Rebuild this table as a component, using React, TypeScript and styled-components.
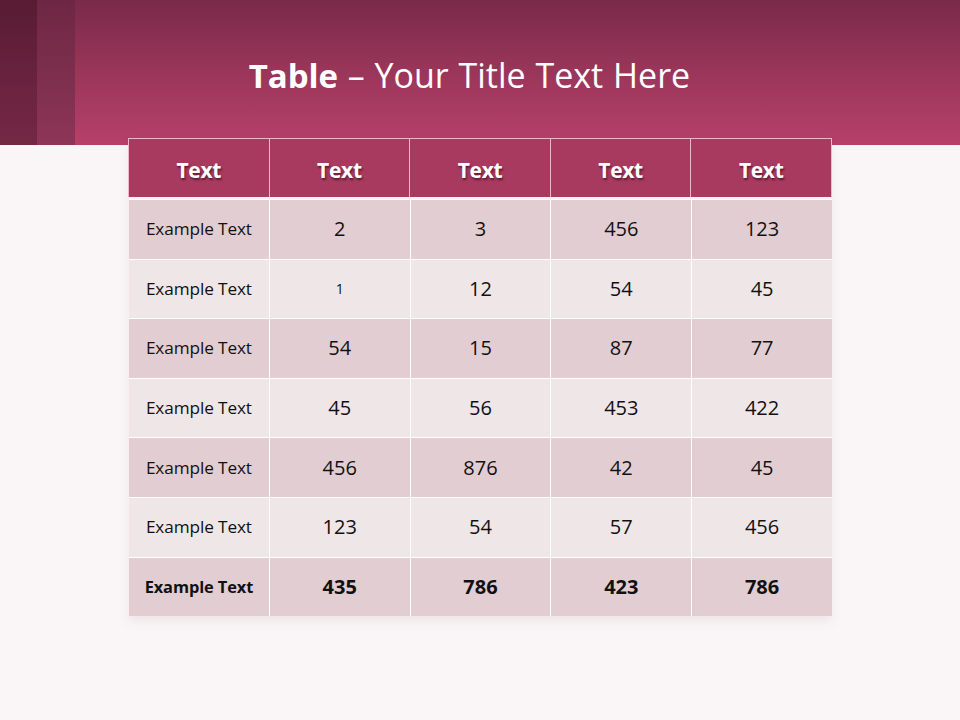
import React from "react";
import styled, { createGlobalStyle } from "styled-components";

const Global = createGlobalStyle`
  html, body { margin: 0; padding: 0; }
  body { background: #faf6f7; font-family: "Open Sans", "Lato", sans-serif; }
`;

const Slide = styled.div`
  width: 960px;
  height: 720px;
  background: #faf6f7;
  display: flex;
  flex-direction: column;
  overflow: hidden;
`;

const Band = styled.header`
  height: 145px;
  display: flex;
  background: linear-gradient(180deg, #7a2a4a 0%, #9a3659 50%, #b6406a 100%);
  flex-shrink: 0;
`;

const Stripe = styled.div<{ $shade: "dark" | "mid" }>`
  width: ${(p) => (p.$shade === "dark" ? 37 : 38)}px;
  background: ${(p) =>
    p.$shade === "dark"
      ? "linear-gradient(180deg, #581b34 0%, #6a2340 60%, #742844 100%)"
      : "linear-gradient(180deg, #6d2744 0%, #80304f 60%, #8e3558 100%)"};
`;

const TitleArea = styled.div`
  flex: 1;
  display: flex;
  justify-content: center;
  padding: 54px 96px 0 0;
`;

const Title = styled.h1`
  margin: 0;
  font-family: "Open Sans", sans-serif;
  font-size: 34px;
  font-weight: 400;
  line-height: 42px;
  color: #ffffff;
  letter-spacing: 0;
  word-spacing: 1px;
  b { font-weight: 700; font-size: 33px; letter-spacing: -0.1px; }
`;

const TableWrap = styled.div`
  margin: -7px 0 0 128px;
  width: 704px;
  display: flex;
  flex-direction: column;
  box-shadow: 0 6px 10px rgba(120, 60, 80, 0.08);
`;

const HeadRow = styled.div`
  display: grid;
  grid-template-columns: repeat(5, 1fr);
  height: 58px;
  border: 1px solid #f2b6ca;
  border-bottom: none;
  background: #f2b6ca;
  gap: 1px;
  margin-bottom: 2px;
`;

const HeadCell = styled.div`
  background: #a8395f;
  display: flex;
  align-items: center;
  justify-content: center;
  padding-top: 3px;
  color: #ffffff;
  font-weight: 700;
  font-size: 21px;
  letter-spacing: -0.3px;
  text-shadow: 1px 2px 2px rgba(40, 0, 15, 0.55);
`;

const Body = styled.div`
  display: flex;
  flex-direction: column;
  background: #ffffff;
  gap: 1px;
  padding-top: 1px;
  border-left: 1px solid #f8eef1;
`;

const Row = styled.div`
  display: grid;
  grid-template-columns: repeat(5, 1fr);
  gap: 1px;
  height: 58.6px;
  background: #ffffff;
`;

const Cell = styled.div<{ $alt: boolean; $bold?: boolean; $small?: boolean; $label?: boolean }>`
  background: ${(p) => (p.$alt ? "#efe6e7" : "#e2cdd3")};
  display: flex;
  align-items: center;
  justify-content: center;
  color: #111111;
  font-size: ${(p) =>
    p.$label ? (p.$bold ? "16.4px" : "17.2px") : p.$small ? "14px" : "20px"};
  letter-spacing: ${(p) => (p.$label ? "-0.1px" : "0")};
  font-weight: ${(p) => (p.$bold ? 700 : 400)};
  padding-bottom: 1px;
`;

const rows: string[][] = [
  ["Example Text", "2", "3", "456", "123"],
  ["Example Text", "1", "12", "54", "45"],
  ["Example Text", "54", "15", "87", "77"],
  ["Example Text", "45", "56", "453", "422"],
  ["Example Text", "456", "876", "42", "45"],
  ["Example Text", "123", "54", "57", "456"],
  ["Example Text", "435", "786", "423", "786"],
];

export default function App() {
  return (
    <Slide>
      <Global />
      <Band>
        <Stripe $shade="dark" />
        <Stripe $shade="mid" />
        <TitleArea>
          <Title>
            <b>Table</b> – Your Title Text Here
          </Title>
        </TitleArea>
      </Band>
      <TableWrap>
        <HeadRow>
          {Array.from({ length: 5 }).map((_, i) => (
            <HeadCell key={i}>Text</HeadCell>
          ))}
        </HeadRow>
        <Body>
          {rows.map((r, ri) => {
            const alt = ri % 2 === 1;
            const bold = ri === rows.length - 1;
            return (
              <Row key={ri}>
                {r.map((c, ci) => (
                  <Cell
                    key={ci}
                    $alt={alt}
                    $bold={bold}
                    $label={ci === 0}
                    $small={ri === 1 && ci === 1}
                  >
                    {c}
                  </Cell>
                ))}
              </Row>
            );
          })}
        </Body>
      </TableWrap>
    </Slide>
  );
}
